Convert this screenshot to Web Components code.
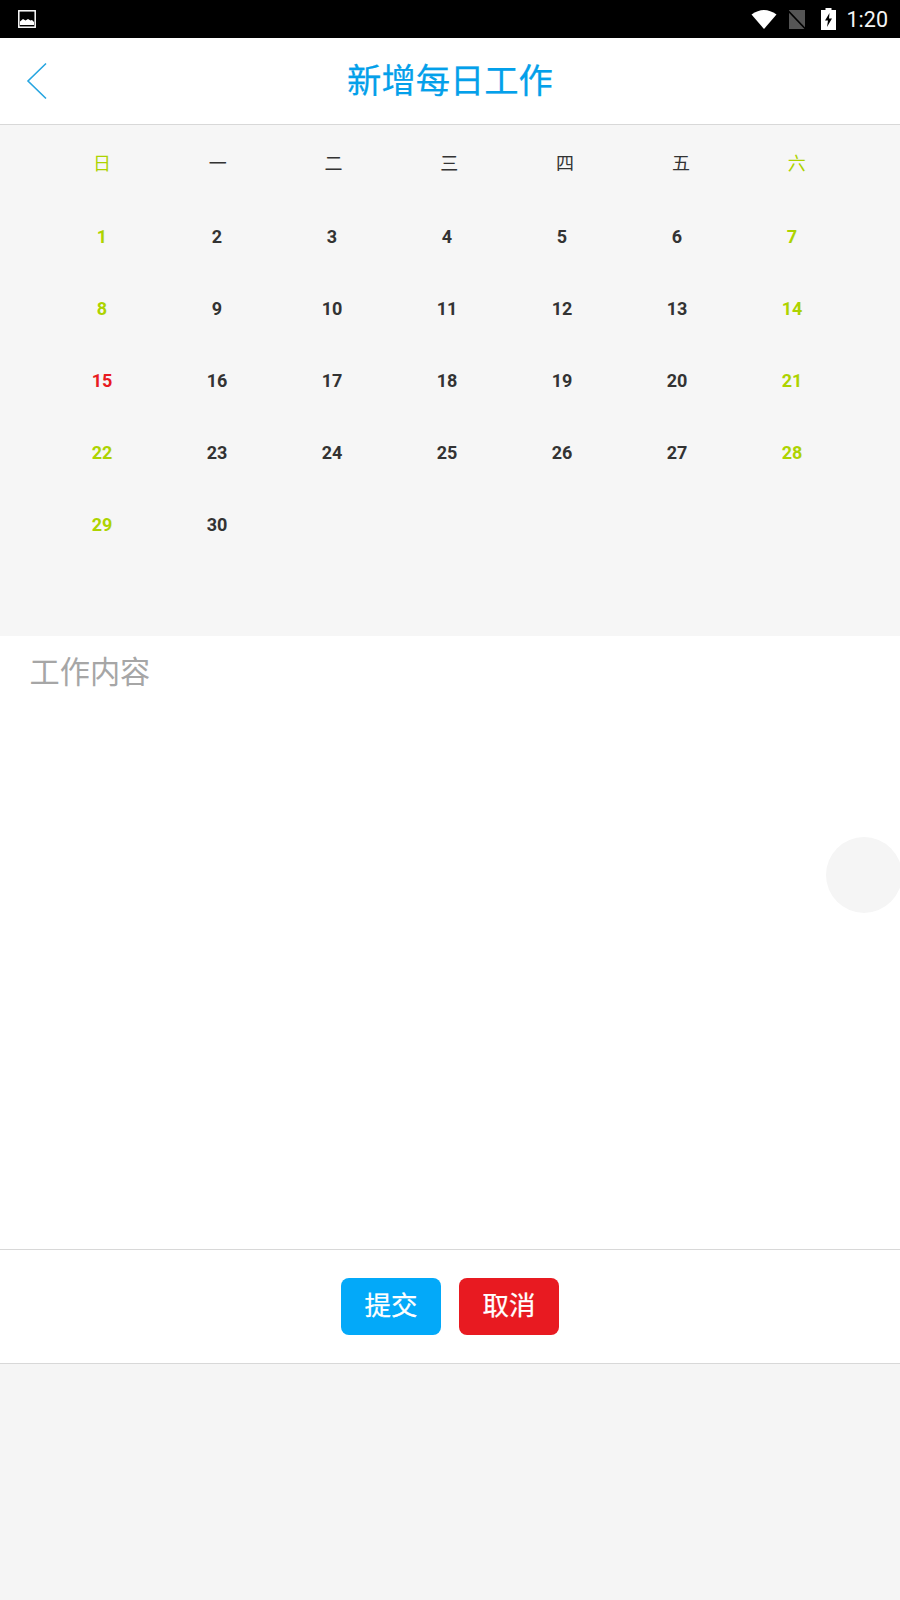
<!DOCTYPE html>
<html>
<head>
<meta charset="utf-8">
<title>新增每日工作</title>
<style>
  html, body { margin: 0; padding: 0; background: #f5f5f5; }
  body { font-family: Roboto, "Noto Sans CJK SC", sans-serif; }
</style>
</head>
<body>
<app-page>
  <status-bar></status-bar>
  <title-bar>新增每日工作</title-bar>
  <month-calendar days="30" start="0" today="15"></month-calendar>
  <work-editor placeholder="工作内容"></work-editor>
  <action-bar>
    <action-button color="#03a9f9">提交</action-button>
    <action-button color="#e81a21">取消</action-button>
  </action-bar>
</app-page>

<script>
class AppPage extends HTMLElement {
  constructor() {
    super();
    this.attachShadow({ mode: 'open' });
  }
  connectedCallback() {
    this.shadowRoot.innerHTML = `
      <style>
        :host { display: block; position: relative; width: 900px; height: 1600px; overflow: hidden; background: #f5f5f5; }
        .assist { position: absolute; left: 826px; top: 837px; width: 76px; height: 76px; border-radius: 50%; background: #f5f5f5; }
      </style>
      <slot></slot>
      <div class="assist"></div>
    `;
  }
}

class StatusBar extends HTMLElement {
  constructor() {
    super();
    this.attachShadow({ mode: 'open' });
  }
  connectedCallback() {
    this.shadowRoot.innerHTML = `
      <style>
        :host { display: flex; align-items: center; height: 38px; background: #000; color: #fff; padding: 0 12px 0 18px; box-sizing: border-box; }
        .right { margin-left: auto; display: flex; align-items: center; }
        svg { display: block; }
        .time { font: 400 21.5px Roboto, sans-serif; margin-left: 11px; margin-top: 1px; color: #f4f4f4; }
      </style>
      <svg width="18" height="18" viewBox="0 0 18 18">
        <rect x="0.8" y="0.8" width="16.4" height="16.4" fill="none" stroke="#fff" stroke-width="1.5"/>
        <path d="M2 15V11.5L5 9L7.5 10.5L10 9L12.5 10.5L14 10L16 12V15Z" fill="#fff"/>
      </svg>
      <div class="right">
        <svg width="26" height="20" viewBox="0 0 26 20" style="margin-right:10px"><path d="M0.5 5.5Q13 -3.5 25.5 5.5L13 20Z" fill="#fff"/></svg>
        <svg width="20" height="21" viewBox="0 0 20 21" style="margin-right:14px">
          <path d="M2 1H18V20H2Z" fill="#555"/>
          <path d="M0.5 1L19 20.5" stroke="#000" stroke-width="1.6"/>
        </svg>
        <svg width="15" height="22" viewBox="0 0 15 22">
          <path d="M4.5 0H10.5V2H15V22H0V2H4.5Z" fill="#fff"/>
          <path d="M8.5 5L4 12.5H7L6 19L11 10.5H8Z" fill="#000"/>
        </svg>
        <span class="time">1:20</span>
      </div>
    `;
  }
}

class TitleBar extends HTMLElement {
  constructor() {
    super();
    this.attachShadow({ mode: 'open' });
  }
  connectedCallback() {
    this.shadowRoot.innerHTML = `
      <style>
        :host { display: flex; align-items: center; justify-content: center; position: relative; height: 87px; padding-bottom: 6px; background: #fff; border-bottom: 1px solid #d8d8d8; box-sizing: border-box; color: #03a0ea; font: 400 34.3px "Noto Sans CJK SC", sans-serif; -webkit-text-stroke: 0.25px #03a0ea; }
        svg { position: absolute; left: 26px; top: 24px; }
      </style>
      <svg width="22" height="38" viewBox="0 0 22 38"><path d="M20 1.5L2 19L20 36.5" fill="none" stroke="#26a5e0" stroke-width="1.6"/></svg>
      <slot></slot>
    `;
  }
}

class MonthCalendar extends HTMLElement {
  constructor() {
    super();
    this.attachShadow({ mode: 'open' });
  }
  connectedCallback() {
    const days = Number(this.getAttribute('days'));
    const start = Number(this.getAttribute('start'));
    const today = Number(this.getAttribute('today'));
    const heads = ['日', '一', '二', '三', '四', '五', '六'];
    let cells = '';
    for (let i = 0; i < start; i++) cells += '<span></span>';
    for (let d = 1; d <= days; d++) {
      const col = (d - 1 + start) % 7;
      let cls = col === 0 || col === 6 ? 'weekend' : '';
      if (d === today) cls = 'today';
      cells += `<span class="${cls}">${d}</span>`;
    }
    this.shadowRoot.innerHTML = `
      <style>
        :host { display: block; height: 511px; background: #f6f6f6; box-sizing: border-box; padding: 0 44px; }
        .heads { display: grid; grid-template-columns: repeat(7, 115.8px); height: 75px; padding-bottom: 2px; box-sizing: border-box; align-items: center; font: 400 18px "Noto Sans CJK SC", sans-serif; color: #333; }
        .heads span { text-align: center; }
        .days { display: grid; grid-template-columns: repeat(7, 115px); grid-auto-rows: 72px; align-items: center; margin-left: 0.5px; font: 700 18px Roboto, sans-serif; color: #333; }
        .weekend { color: #add300; }
        .today { color: #e81a21; }
        .days span { text-align: center; }
        .heads span:first-child, .heads span:last-child { color: #add300; }
      </style>
      <div class="heads">${heads.map(h => `<span>${h}</span>`).join('')}</div>
      <div class="days">${cells}</div>
    `;
  }
}

class WorkEditor extends HTMLElement {
  constructor() {
    super();
    this.attachShadow({ mode: 'open' });
  }
  connectedCallback() {
    this.shadowRoot.innerHTML = `
      <style>
        :host { display: block; height: 613px; background: #fff; box-sizing: border-box; padding: 12px 29.5px; color: #a6a6a6; font: 400 30.2px/44px "Noto Sans CJK SC", sans-serif; }
      </style>
      ${this.getAttribute('placeholder')}
    `;
  }
}

class ActionBar extends HTMLElement {
  constructor() {
    super();
    this.attachShadow({ mode: 'open' });
  }
  connectedCallback() {
    this.shadowRoot.innerHTML = `
      <style>
        :host { display: flex; justify-content: center; align-items: center; gap: 18px; height: 115px; background: #fff; border-top: 1px solid #d8d8d8; border-bottom: 1px solid #d8d8d8; box-sizing: border-box; }
      </style>
      <slot></slot>
    `;
  }
}

class ActionButton extends HTMLElement {
  constructor() {
    super();
    this.attachShadow({ mode: 'open' });
  }
  connectedCallback() {
    this.shadowRoot.innerHTML = `
      <style>
        :host { display: flex; align-items: center; justify-content: center; width: 100px; height: 57px; padding-bottom: 7px; box-sizing: border-box; border-radius: 8px; color: #fff; font: 400 26.5px "Noto Sans CJK SC", sans-serif; -webkit-text-stroke: 0.25px #fff; background: ${this.getAttribute('color')}; }
      </style>
      <slot></slot>
    `;
  }
}

customElements.define('app-page', AppPage);
customElements.define('status-bar', StatusBar);
customElements.define('title-bar', TitleBar);
customElements.define('month-calendar', MonthCalendar);
customElements.define('work-editor', WorkEditor);
customElements.define('action-bar', ActionBar);
customElements.define('action-button', ActionButton);
</script>
</body>
</html>
